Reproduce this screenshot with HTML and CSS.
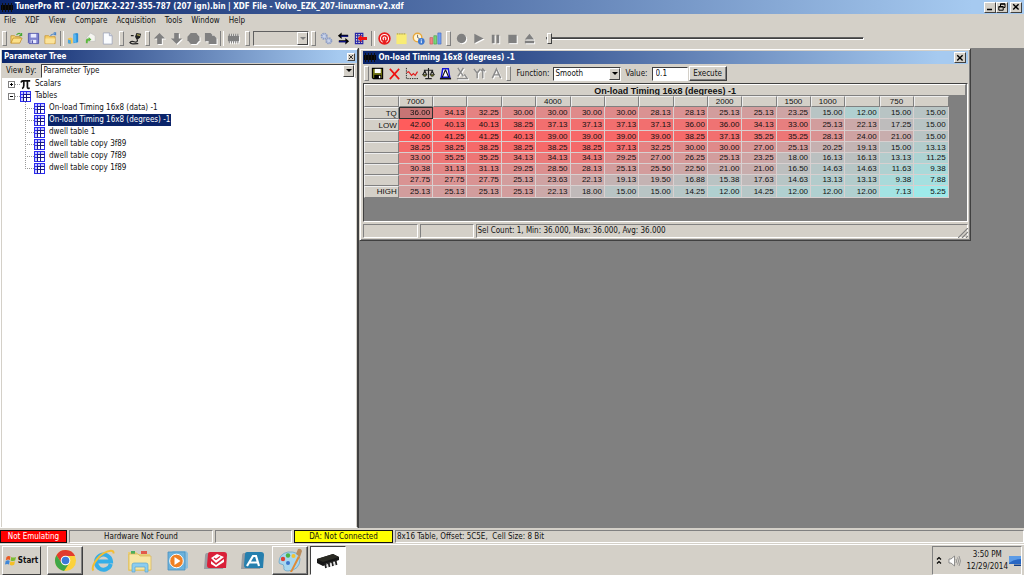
FILE: index.html
```html
<!DOCTYPE html>
<html lang="en">
<head>
<meta charset="utf-8">
<title>TunerPro RT</title>
<link rel="stylesheet" href="styles.css">
</head>
<body>
<header class="titlebar app-title">
  <svg class="chip" width="12" height="9" viewBox="0 0 12 9"><path d="M0 2h12v5H0z" fill="#050505"/><path d="M1.5 0v9M4.5 0v9M7.5 0v9M10.5 0v9" stroke="#111" stroke-width="1"/></svg>
  <h1>TunerPro RT - (207)EZK-2-227-355-787 (207 ign).bin | XDF File - Volvo_EZK_207-linuxman-v2.xdf</h1>
  <div class="winbtns">
    <button class="wb" aria-label="Minimize"><svg width="8" height="8" viewBox="0 0 8 8"><path d="M1 6.5h5" stroke="#000" stroke-width="1.5"/></svg></button>
    <button class="wb" aria-label="Restore"><svg width="8" height="8" viewBox="0 0 8 8"><path d="M2.500 3V.8h4.500v3.700H5.500M2.500 1.200h4.500M.8 3.500h4.400v3.700H.8zM.8 4h4.400" fill="none" stroke="#000"/></svg></button>
    <button class="wb wb-close" aria-label="Close"><svg width="8" height="8" viewBox="0 0 8 8"><path d="M1.200 1.200l5.400 5.400M6.600 1.200L1.200 6.600" stroke="#000" stroke-width="1.400"/></svg></button>
  </div>
</header>

<nav class="menubar">
  <button>File</button><button>XDF</button><button>View</button><button>Compare</button><button>Acquisition</button><button>Tools</button><button>Window</button><button>Help</button>
</nav>

<div class="toolbar main-tools">
  <span class="grip"></span>
  <button aria-label="Open bin"><svg viewBox="0 0 14 14"><path d="M1 12V4h4l1 1h5v2" fill="#f7d774" stroke="#b98a2a" stroke-width=".8"/><path d="M1 12l2.500-5.500H13L10.500 12z" fill="#fbe08a" stroke="#c08a20" stroke-width=".8"/><path d="M7 3q3-3 5 0M12.500 1v2.800H10" fill="none" stroke="#46a832" stroke-width="1.200"/></svg></button>
  <button aria-label="Save bin"><svg viewBox="0 0 14 14"><path d="M1.500 1.500h11v11h-10l-1-1z" fill="#7f83cf" stroke="#5256ad"/><path d="M4 2h6v4H4z" fill="#e8eaff"/><path d="M4 8.500h6V12H4z" fill="#e8eaff"/><path d="M5 9h1.500v3H5z" fill="#5256ad"/></svg></button>
  <button aria-label="Open XDF"><svg viewBox="0 0 14 14"><path d="M1 12.500V4h4l1 1h6v7.500z" fill="#f5ce68" stroke="#c79432" stroke-width=".8"/><path d="M1.500 7h10.500l-1 5.500H1.500z" fill="#fbe39a"/><path d="M7 4q3-3 5-1M10.500 1h2v2.500" fill="none" stroke="#4b86c9" stroke-width="1.200"/></svg></button>
  <span class="sep"></span>
  <button aria-label="Compare files"><svg viewBox="0 0 14 14"><path d="M7 2l4-1 1 1v9l-5 1z" fill="#2b8ed8"/><path d="M7 2l3 1v9l-3-1z" fill="#59b6ee"/><path d="M1 7l3-1 2 1v5l-3 1-2-1z" fill="#f2c34d"/><path d="M1 8l3 1v4l-3-1z" fill="#4aa5df"/></svg></button>
  <button aria-label="Recent"><svg viewBox="0 0 14 14"><path d="M3 6l4-5 5 3v6H6z" fill="#f5f5f0" stroke="#bbb" stroke-width=".6"/><path d="M2 12V9q0-2 3-2v-1.500L8 8 5 10.500V9.200q-1 0-1 1.500V12z" fill="#5cb83e"/></svg></button>
  <button aria-label="New"><svg viewBox="0 0 14 14"><path d="M2.500 1H9l3 3v9H2.500z" fill="#fafcff" stroke="#9aa0b8" stroke-width=".8"/><path d="M9 1v3h3" fill="#d8dcea" stroke="#9aa0b8" stroke-width=".8"/></svg></button>
  <span class="grip wide"></span>
  <button aria-label="Connect"><svg viewBox="0 0 14 14"><path d="M8 1l5 1-1 4-2.500 2H8L6.500 5z" fill="#222"/><path d="M8.500 3l3.500.6" stroke="#e0d66a"/><path d="M2 4h3M9 8v1.500q-.5 2-3.500 1T1 11.500q1 1.500 4 1.200t5-.2" fill="none" stroke="#222" stroke-width="1.300"/></svg></button>
  <span class="grip"></span>
  <button aria-label="Upload"><svg class="dim" viewBox="0 0 14 14"><path d="M7 1l6 6H9.500v6h-5V7H1z"/></svg></button>
  <button aria-label="Download"><svg class="dim" viewBox="0 0 14 14"><path d="M7 13l6-6H9.500V1h-5v6H1z"/></svg></button>
  <button aria-label="Verify"><svg class="dim" viewBox="0 0 14 14"><path d="M4 1h6l3.500 4v4L10 13H4L.5 9V5z"/></svg></button>
  <button aria-label="Copy"><svg class="dim" viewBox="0 0 14 14"><path d="M1 1h6l2 2v1h2l2.500 2.500V13H5v-3H1z"/></svg></button>
  <span class="sep"></span>
  <button aria-label="Chip"><svg class="dim" viewBox="0 0 14 14"><path d="M1 4h12v6H1z"/><path d="M2 2h1v10H2zM4.300 2h1v10h-1zM6.600 2h1v10h-1zM8.900 2h1v10h-1zM11.200 2h1v10h-1z"/></svg></button>
  <span class="grip wide"></span>
  <span class="combo device"><select aria-label="Device" disabled><option></option></select><i class="arrow"></i></span>
  <span class="grip mid"></span>
  <button aria-label="Settings"><svg viewBox="0 0 14 14"><circle cx="4.500" cy="4.500" r="2.800" fill="#c7d2ea" stroke="#8c9cc4" stroke-width="2" stroke-dasharray="1.500 .7"/><circle cx="9.500" cy="9.500" r="2.800" fill="#c7d2ea" stroke="#8c9cc4" stroke-width="2" stroke-dasharray="1.500 .7"/></svg></button>
  <button aria-label="Swap"><svg viewBox="0 0 14 14"><path d="M1 4l4-3.500V3h7v2H5v2.500z" fill="#000"/><path d="M13 10L9 6.500V9H2v2h7v2.500z" fill="#000"/><path d="M4 4.500h8M2 10.500h8" stroke="#1018b8"/></svg></button>
  <button aria-label="Table compare"><svg viewBox="0 0 14 14"><path d="M1.500 1.500h8v11h-8zM4 1v12M7 1v12M1 4h9M1 7h9M1 10h9" fill="none" stroke="#2424a8" stroke-width="1.200"/><path d="M4 7l4-4v2.500h6v3H8V11z" fill="#f01414"/></svg></button>
  <span class="sep broad"></span>
  <button aria-label="Record target"><svg viewBox="0 0 14 14"><circle cx="7" cy="7" r="5.800" fill="#fff" stroke="#e81c1c" stroke-width="1.800"/><circle cx="7" cy="7" r="3" fill="#fff" stroke="#e81c1c" stroke-width="1.600"/><path d="M7 6v5M5 11h4" stroke="#e81c1c" stroke-width="1.500"/></svg></button>
  <button aria-label="Notes"><svg viewBox="0 0 14 14"><path d="M1.500 2h11v11h-11z" fill="#f8ec74"/><path d="M2 2h10" stroke="#b5a852" stroke-dasharray="1 1" stroke-width="2"/></svg></button>
  <button aria-label="Info"><svg viewBox="0 0 14 14"><circle cx="6" cy="6" r="4.600" fill="#fff5d8" stroke="#e8a83c" stroke-width="1.500"/><path d="M6 3v3l2 1" stroke="#666" fill="none"/><circle cx="10" cy="10" r="3.600" fill="#3e78d0"/><path d="M10 9v3M10 7.500v.8" stroke="#fff"/></svg></button>
  <button aria-label="Histogram"><svg viewBox="0 0 14 14"><path d="M1 6h3v7H1z" fill="#f08484" stroke="#c25252" stroke-width=".6"/><path d="M5.200 4h3v9h-3z" fill="#77d877" stroke="#3d9a3d" stroke-width=".6"/><path d="M9.500 1h3.500v12H9.500z" fill="#6d9cf0" stroke="#3d62b8" stroke-width=".6"/></svg></button>
  <span class="grip mid"></span>
  <button aria-label="Record"><svg class="dim" viewBox="0 0 14 14"><circle cx="7" cy="7" r="5"/></svg></button>
  <button aria-label="Play"><svg class="dim" viewBox="0 0 14 14"><path d="M2.500 2l10 5-10 5z"/></svg></button>
  <button aria-label="Pause"><svg class="dim" viewBox="0 0 14 14"><path d="M3 3h3v9H3zM8 3h3v9H8z"/></svg></button>
  <button aria-label="Stop"><svg class="dim" viewBox="0 0 14 14"><path d="M2.500 3h9v9h-9z"/></svg></button>
  <button aria-label="Eject"><svg class="dim" viewBox="0 0 14 14"><path d="M7 2l5 6H2zM2 9.500h10V12H2z"/></svg></button>
  <input class="seek" type="range" min="0" max="100" value="0" aria-label="Playback position">
</div>

<main class="workspace">
  <section class="side">
    <div class="titlebar side-title"><h2>Parameter Tree</h2><button class="wb tiny" aria-label="Close panel"><svg width="6" height="6" viewBox="0 0 6 6"><path d="M1 1l4 4M5 1L1 5" stroke="#333"/></svg></button></div>
    <div class="viewby"><label for="view">View By:</label><span class="combo view"><select id="view"><option>Parameter Type</option></select><i class="arrow"></i></span></div>
    <ul class="tree">
      <li class="node first"><i class="box plus"></i><i class="dash"></i><svg class="ti" viewBox="0 0 11 11"><path d="M1 3.500Q1.500 1.800 3 1.800h7.200M3.800 2v4.500Q3.800 9 2 9.500M7.400 2v6q0 1.700 2.300 1.200" fill="none" stroke="#111" stroke-width="1.700"/></svg><span>Scalars</span></li>
      <li class="node"><i class="box"></i><i class="dash"></i><svg class="ti"><use href="#grid"/></svg><span>Tables</span></li>
      <li class="leaf"><i class="elbow"></i><svg class="ti"><use href="#grid"/></svg><span>On-load Timing 16x8 (data) -1</span></li>
      <li class="leaf"><i class="elbow"></i><svg class="ti"><use href="#grid"/></svg><span class="sel">On-load Timing 16x8 (degrees) -1</span></li>
      <li class="leaf"><i class="elbow"></i><svg class="ti"><use href="#grid"/></svg><span>dwell table 1</span></li>
      <li class="leaf"><i class="elbow"></i><svg class="ti"><use href="#grid"/></svg><span>dwell table copy 3f89</span></li>
      <li class="leaf"><i class="elbow"></i><svg class="ti"><use href="#grid"/></svg><span>dwell table copy 7f89</span></li>
      <li class="leaf"><i class="elbow end"></i><svg class="ti"><use href="#grid"/></svg><span>dwell table copy 1f89</span></li>
    </ul>
    <svg class="defs"><symbol id="grid" viewBox="0 0 11 11"><path d="M0 0h11v11H0z" fill="#2a2af0"/><path d="M1 1h2v2H1zM4 1h2v2H4zM7 1h3v2H7zM1 4h2v2H1zM1 7h2v3H1z" fill="#c9c9ff"/><path d="M4 4h2v2H4zM7 4h3v2H7zM4 7h2v3H4zM7 7h3v3H7z" fill="#fff"/><path d="M3.500 6.500h7M6.500 3.500v7M3.500 3.500h7M3.500 3.500v7" stroke="#15156a" stroke-width=".8"/></symbol></svg>
  </section>

  <section class="mdi">
    <article class="child">
      <div class="titlebar child-title">
        <svg class="chip" width="12" height="9" viewBox="0 0 12 9"><path d="M0 2h12v5H0z" fill="#050505"/><path d="M1.500 0v9M4.500 0v9M7.500 0v9M10.500 0v9" stroke="#111"/></svg>
        <h2>On-load Timing 16x8 (degrees) -1</h2>
        <button class="wb" aria-label="Close table"><svg width="8" height="8" viewBox="0 0 8 8"><path d="M1.200 1.200l5.400 5.400M6.600 1.200L1.200 6.600" stroke="#000" stroke-width="1.400"/></svg></button>
      </div>
      <div class="toolbar child-tools">
        <span class="grip thin"></span>
        <button aria-label="Save"><svg viewBox="0 0 14 14"><path d="M1.500 1.500h11v11h-10l-1-1z" fill="#6c7010" stroke="#000" stroke-width="1.200"/><path d="M4 2h6.500v4.500H4z" fill="#fff"/><path d="M3.500 8.500h7.500V13H3.500z" fill="#000"/><path d="M8.500 9.500H10V12H8.500z" fill="#fff"/></svg></button>
        <button aria-label="Discard"><svg viewBox="0 0 14 14"><path d="M2 2l10 11M12 2L2 13" stroke="#ee1111" stroke-width="1.800"/></svg></button>
        <button aria-label="Graph"><svg viewBox="0 0 14 14"><path d="M1.500 1v11.500H14" fill="none" stroke="#222" stroke-dasharray="1.500 1"/><path d="M2 6l2-1 3 4 2-2 2 2 2.500-4" fill="none" stroke="#e01c1c" stroke-width="1.300"/></svg></button>
        <button aria-label="Compare"><svg viewBox="0 0 14 14"><path d="M7 1v11M3.500 12.500h7M2 3.500h10M3 4L1 8.500M3 4l2 4.500M11 4L9 8.500M11 4l2 4.500" fill="none" stroke="#222" stroke-width="1.200"/><path d="M.5 8h5L4 10H2zM8.500 8h5L12 10h-2z" fill="#66681a" stroke="#222" stroke-width=".6"/></svg></button>
        <button aria-label="Difference"><svg viewBox="0 0 14 14"><path d="M4 2h6l1.500 9h-9z" fill="#fff" stroke="#1414d8" stroke-width="1.600"/><path d="M1 12.500h12" stroke="#111" stroke-width="1.800"/><path d="M7 3L3.500 11M7 3l3.500 8" stroke="#111" stroke-width="1.200"/></svg></button>
        <button aria-label="X axis"><svg class="line" viewBox="0 0 14 14"><path d="M2 1l6 9M8 1L2 10M1 12.500h12M9 8l3 4"/></svg></button>
        <button aria-label="Y axis"><svg class="line" viewBox="0 0 14 14"><path d="M1 2l3.500 4.500L8 2M4.500 6.500V12M10.500 2v10M8.500 4.500l2-2.500 2.500 2.500"/></svg></button>
        <button aria-label="Auto"><svg class="line" viewBox="0 0 14 14"><path d="M2.500 12L7 2l4.500 10M4.200 8.500h5.600"/></svg></button>
        <span class="grip"></span>
        <label for="fn">Function:</label>
        <span class="combo fn"><select id="fn"><option>Smooth</option></select><i class="arrow"></i></span>
        <label for="val">Value:</label>
        <input id="val" class="val" type="text" value="0.1">
        <button class="execute">Execute</button>
      </div>
      <div class="sheet">
        <div class="caption" id="cap"><span>On-load Timing 16x8 (degrees) -1</span></div>
        <table class="map" aria-labelledby="cap"><thead></thead><tbody></tbody></table>
      </div>
      <footer class="childstatus"><span class="cell c1"></span><span class="cell c2"></span><span class="cell c3">Sel Count: 1, Min: 36.000, Max: 36.000, Avg: 36.000</span>
        <svg class="sizer" width="10" height="10" viewBox="0 0 10 10"><path d="M0 10L10 0M4 10l6-6M8 10l2-2" stroke="#808080" stroke-width="1.200"/></svg>
      </footer>
    </article>
  </section>
</main>

<footer class="status">
  <span class="cell s-red">Not Emulating</span><span class="cell s-hw">Hardware Not Found</span><span class="cell s-blank"></span><span class="cell s-yel">DA: Not Connected</span><span class="cell s-info">8x16 Table, Offset: 5C5E,&nbsp; Cell Size: 8 Bit</span>
</footer>

<nav class="taskbar">
  <button class="start"><svg width="12" height="11" viewBox="0 0 12 11"><path d="M1.500 2Q3.500.3 5.500 1.500L4.800 5Q3 4 .8 5.300z" fill="#ea5a24"/><path d="M6.300 1.900q2 1.200 4.700 0L10.200 5.500Q8 6.500 5.500 5.400z" fill="#7dbb32"/><path d="M.7 6q2-1.300 4-.3L4 9.500Q2 8.400 0 9.600z" fill="#3f87d8"/><path d="M5.400 6.200q2.300 1 4.600 0L9.200 9.700q-2.300 1.300-4.500.1z" fill="#f5bf26"/></svg>Start</button>
  <div class="tasks">
  <button class="task raised" aria-label="Chrome"><svg width="23" height="23" viewBox="0 0 24 24"><circle cx="12" cy="12" r="11" fill="#fcd23c"/><path d="M2.500 6.500A11 11 0 0 1 22 7.200H12A5 5 0 0 0 7.400 14z" fill="#e23b2e"/><path d="M2.500 6.500A11 11 0 0 0 10.500 22.900L15.500 15.500A5 5 0 0 1 7.500 14.200z" fill="#3fa648"/><circle cx="12" cy="12" r="5" fill="#fff"/><circle cx="12" cy="12" r="4" fill="#3c79d8"/></svg></button>
  <button class="task" aria-label="Internet Explorer"><svg width="24" height="24" viewBox="0 0 24 24"><path d="M19.800 15A7.500 7.500 0 1 1 20 12.500H7" fill="none" stroke="#35aee8" stroke-width="4"/><path d="M2.500 21.500C-.5 18 6 8 13 4 18 1 23 .5 22.500 4.500" fill="none" stroke="#f4bd32" stroke-width="2"/></svg></button>
  <button class="task" aria-label="Explorer"><svg width="26" height="24" viewBox="0 0 26 24"><path d="M1 3h8l2 2h12v17H1z" fill="#e9ce78"/><path d="M4 2h4v3H4z" fill="#4cae5a"/><path d="M14 2h6v3h-6z" fill="#e25a4a"/><path d="M2 5h9l2 2h11v14H2z" fill="#f8e6a4" stroke="#d7b458" stroke-width=".7"/><path d="M5 23v-7q0-2 2-2h12q2 0 2 2v7h-3v-5H8v5z" fill="#8ccdf0" stroke="#5ba6cf" stroke-width=".7"/></svg></button>
  <button class="task" aria-label="Media Player"><svg width="22" height="22" viewBox="0 0 22 22"><path d="M5 1h14l2 2v15l-2 1z" fill="#8ebfdc"/><path d="M1 2h17v18H1z" fill="#6bb2dc" stroke="#4a8fbe" stroke-width=".8"/><circle cx="9.500" cy="11" r="6.800" fill="#f08022" stroke="#fff"/><path d="M7.500 7l6 4-6 4z" fill="#fff"/></svg></button>
  <button class="task" aria-label="Red app"><svg width="25" height="20" viewBox="0 0 25 20"><path d="M4 2Q2 2 2 5L1 18h19l1-3V2z" fill="#999da2"/><path d="M7 1h14q3 0 3 3l-1 13H6Q4 17 4 14L5 3q0-2 2-2z" fill="#d91f38"/><path d="M8 7l6-4 7 3-8 6z" fill="#fff"/><path d="M11 7l2 1.500 4-3" fill="none" stroke="#d91f38" stroke-width="1.200"/><path d="M8 10l5 4 8-6v3l-8 5-5-3z" fill="#fff"/></svg></button>
  <button class="task" aria-label="Blue app"><svg width="25" height="20" viewBox="0 0 25 20"><path d="M4 2Q2 2 2 5L1 18h19l1-3V2z" fill="#999da2"/><path d="M7 1h14q3 0 3 3l-1 13H6Q4 17 4 14L5 3q0-2 2-2z" fill="#267fae"/><path d="M7 15l6-10h3l3 10M10 11.500h8" fill="none" stroke="#fff" stroke-width="2.200"/></svg></button>
  <button class="task raised" aria-label="Paint"><svg width="26" height="25" viewBox="0 0 26 25"><path d="M2 14Q2 6 11 4q11-1 12 7 0 11-12 12-5 0-4-4 0-3-3-3-2 0-2-2z" fill="#a8d6ee" stroke="#6aa5c8" stroke-width=".8"/><circle cx="6" cy="11" r="2.200" fill="#dd3f34"/><circle cx="11" cy="7.500" r="2.200" fill="#4ab447"/><circle cx="16.500" cy="8" r="2" fill="#f3c330"/><circle cx="11" cy="15" r="2" fill="#3a75cd"/><path d="M13 24l8-16 2 1-8 15z" fill="#e08b36"/><path d="M19 6l2-5q3-1 4 2l-2 6z" fill="#b98c5c"/></svg></button>
  <button class="task pressed" aria-label="TunerPro"><svg width="24" height="16" viewBox="0 0 24 16"><path d="M1 6L17 1l6 3v3L7 13l-6-3z" fill="#161616"/><path d="M1 6L17 1l6 3L7 9z" fill="#2b2b24"/><path d="M9 10l1 5M12.500 9l1 5M16 8l1 5M19.500 7l1 5" stroke="#222" stroke-width="1.800"/><path d="M10.800 10.500l1 4M14.300 9.500l1 4M17.800 8.500l1 4" stroke="#ddd" stroke-width=".9"/></svg></button>
  </div>
  <div class="tray">
    <svg width="6" height="9" viewBox="0 0 6 9"><path d="M1 3.500l2-2 2 2M1 7.500l2-2 2 2" fill="none" stroke="#000" stroke-width="1.200"/></svg>
    <svg width="13" height="12" viewBox="0 0 13 12"><path d="M1 4h2l3.500-3v10L3 8H1z" fill="#fff" stroke="#777" stroke-width=".8"/><path d="M8 4q1.200 2 0 4M9.500 2.500q2.300 3.500 0 7M11 1q3 5 0 10" fill="none" stroke="#888" stroke-width=".8"/></svg>
    <div class="when">
      <time class="clock"><span>3:50 PM</span><span>12/29/2014</span></time>
      <svg width="12" height="12" viewBox="0 0 12 12"><path d="M0 1h12v8H0z" fill="#2867c4"/><path d="M0 1h12v3Q5 4 0 8z" fill="#5c9be6"/><path d="M5 9.500h7V11H5z" fill="#123e86"/></svg>
    </div>
  </div>
</nav>
<script src="map.js"></script>
</body>
</html>
```
FILE: styles.css
```css
* { box-sizing: border-box; }
:root { --face: #d4d0c8; --shade: #808080; --dark: #404040; --lite: #fff; }
body {
  margin: 0; height: 100vh; display: flex; flex-direction: column; overflow: hidden;
  background: var(--face); color: #111;
  font: 8px/12px "DejaVu Sans Condensed", "DejaVu Sans", sans-serif;
}
h1, h2 { margin: 0; font-size: inherit; line-height: inherit; white-space: nowrap; }
button, input, select { font: inherit; color: inherit; margin: 0; padding: 0; border: 0; background: none; border-radius: 0; }
svg { display: block; flex: none; }
.defs { width: 0; height: 0; }

.titlebar { display: flex; align-items: center; color: #fff; background: linear-gradient(90deg, #0a246a, #a6caf0 95%); flex: none; font-weight: bold; }
.titlebar h1, .titlebar h2 { flex: 1; }
.app-title { height: 14px; padding: 0 2px 0 1px; gap: 2px; }
.winbtns { display: flex; }
.wb { width: 12px; height: 11px; display: flex; align-items: center; justify-content: center; background: var(--face); border: 1px solid; border-color: #fff #404040 #404040 #fff; }
.wb-close { margin-left: 2px; }
.tiny { width: 8px; height: 8px; }

.menubar { display: flex; height: 14px; flex: none; padding-left: 4px; gap: 9px; }
.menubar button { line-height: 14px; }

.toolbar { display: flex; align-items: center; flex: none; }
.toolbar > button { width: 17px; height: 17px; display: flex; align-items: center; justify-content: center; flex: none; }
.toolbar > button svg { width: 13px; height: 13px; }
.main-tools { height: 20px; padding-left: 1px; }
.dim { fill: #808080; filter: drop-shadow(1px 1px 0 #fff); }
.line { fill: none; stroke: #8a8a8a; stroke-width: 1.5px; filter: drop-shadow(1px 1px 0 #fff); }
.grip, .sep { flex: none; display: flex; justify-content: center; width: 7px; height: 15px; }
.grip::before { content: ""; width: 3px; border: 1px solid; border-color: #fff #808080 #808080 #fff; }
.sep { width: 6px; }
.sep::before { content: ""; width: 2px; border-left: 1px solid #808080; border-right: 1px solid #fff; }
.thin { width: 6px; }
.wide { width: 11px; }
.mid { width: 9px; }
.broad { width: 7px; }

.combo { display: flex; position: relative; background: #fff; border: 1px solid; border-color: #808080 #fff #fff #808080; }
.combo select { appearance: none; flex: 1; width: 100%; padding-left: 1px; }
.arrow { position: absolute; right: 0; top: 0; bottom: 0; width: 11px; background: var(--face); border: 1px solid; border-color: #fff #404040 #404040 #fff; pointer-events: none; display: flex; align-items: center; justify-content: center; }
.arrow::before { content: ""; border: 3px solid transparent; border-top-color: #000; border-bottom: 0; }
.device { width: 56px; height: 15px; background: var(--face); border-color: #606060 #fff #fff #606060; }
.device .arrow::before { border-top-color: #808080; }

.seek { appearance: none; width: 318px; height: 14px; margin-left: 8px; }
.seek::-webkit-slider-runnable-track { height: 3px; border: 1px solid; border-color: #606060 #fff #fff #606060; background: #404040; }
.seek::-webkit-slider-thumb { appearance: none; width: 5px; height: 11px; margin-top: -5px; background: var(--face); border: 1px solid; border-color: #fff #404040 #404040 #fff; }

.workspace { flex: 1; display: flex; min-height: 0; }
.side { flex: 0 0 35%; display: flex; flex-direction: column; border: 1px solid; border-color: #fff #404040 #fff #fff; border-top-width: 2px; padding: 0 0 0 1px; }
.side-title { height: 13px; padding: 0 2px 0 2px; }
.viewby { display: flex; align-items: center; height: 15px; padding-left: 4px; gap: 5px; flex: none; }
.view { flex: 1; height: 14px; margin-right: 2px; border-color: #404040 #fff #fff #404040; }
.tree { flex: 1; margin: 0; padding: 0; list-style: none; background: #fff; border-right: 1px solid #d4d0c8; }
.tree li { display: flex; align-items: center; height: 12px; }
.node { padding-left: 6px; }
.box { width: 7px; height: 7px; border: 1px solid #808080; background: linear-gradient(#000, #000) center / 3px 1px no-repeat; }
.plus { background: linear-gradient(#000, #000) center / 3px 1px no-repeat, linear-gradient(#000, #000) center / 1px 3px no-repeat; }
.dash { width: 5px; border-top: 1px dotted #999; }
.ti { width: 11px; height: 11px; margin-right: 2px; }
.tree span { padding: 0 1px; margin-left: 1px; }
.tree .sel { background: #0a246a; color: #fff; }
.leaf { padding-left: 23px; }
.elbow { width: 9px; height: 12px; background: repeating-linear-gradient(#999 0 1px, transparent 1px 2px) left top / 1px 100% no-repeat, repeating-linear-gradient(90deg, #999 0 1px, transparent 1px 2px) left center / 100% 1px no-repeat; }
.end { background-size: 1px 6px, 100% 1px; }

.mdi { flex: 1; min-width: 0; background: #808080; border-left: 1px solid #404040; }
.child { width: 92%; background: var(--face); border: 1px solid; border-color: var(--face) #404040 #404040 var(--face); box-shadow: inset 1px 1px #fff, inset -1px -1px #808080; padding: 2px 2px 2px 3px; }
.child-title { height: 13px; padding: 0 2px 0 1px; gap: 2px; }
.child-tools { height: 19px; }
.child-tools label { margin: 0 4px; }
.fn { width: 68px; height: 14px; border-color: #404040 #fff #fff #404040; }
.val { width: 36px; height: 14px; padding-left: 3px; background: #fff; border: 1px solid; border-color: #404040 #fff #fff #404040; }
.toolbar > .execute { width: 38px; height: 15px; margin-left: 1px; border: 1px solid; border-color: #fff #404040 #404040 #fff; box-shadow: inset -1px -1px #808080; }
.sheet { height: 139px; background: #808080; border: 1px solid; border-color: #404040 #fff #fff #404040; font-family: "Liberation Sans", Arial, sans-serif; }
.caption { height: 12px; overflow: hidden; margin-right: 1px; background: var(--face); border: 1px solid; border-color: #fff #808080 #808080 #fff; text-align: center; font: bold 9px/13px "Liberation Sans", Arial, sans-serif; }
.map { table-layout: fixed; width: 97%; height: 102px; border-collapse: separate; border-spacing: 0; line-height: 9px; }
.map th, .map td { padding: 0 2px 0 0; text-align: right; font-weight: normal; overflow: hidden; white-space: nowrap; }
.map th { background: var(--face); border: 1px solid; border-color: #eee #808080 #808080 #eee; padding: 0 1px 0 0; }
.map thead th { text-align: center; }
.map td { border: solid #d8d0d0; border-width: 0 1px 1px 0; }
.map .picked { outline: 1px solid #333; outline-offset: -1px; filter: saturate(70%) brightness(95%); }
.childstatus { display: flex; height: 14px; margin-top: 2px; gap: 2px; position: relative; }
.cell { border: 1px solid; border-color: #808080 #fff #fff #808080; white-space: nowrap; overflow: hidden; }
.c1 { width: 55px; } .c2 { width: 54px; } .c3 { flex: 1; line-height: 12px; }
.sizer { position: absolute; right: 0; bottom: 0; }

.status { display: flex; gap: 2px; height: 16px; flex: none; padding: 2px 0 1px; text-align: center; line-height: 11px; }
.s-red { width: 67px; background: #f00; color: #fff; border-color: #111; }
.s-hw { width: 144px; }
.s-blank { width: 77px; }
.s-yel { width: 99px; background: #ff0; border-color: #111; }
.s-info { flex: 1; text-align: left; padding-left: 1px; }

.taskbar { display: flex; align-items: stretch; height: 31px; flex: none; border-top: 1px solid #fff; padding: 1px 2px 0 2px; }
.start { width: 39px; margin-right: 6px; display: flex; align-items: center; justify-content: center; gap: 1px; font-weight: bold; border: 1px solid; border-color: #fff #404040 #404040 #fff; }
.tasks { display: flex; justify-content: space-between; width: 299px; }
.task { width: 36px; display: flex; align-items: center; justify-content: center; border: 1px solid transparent; }
.raised { border-color: #fff #404040 #404040 #fff; box-shadow: inset -1px -1px #808080; }
.pressed { background: #fff; border-color: #404040 #fff #fff #404040; }
.tray { margin-left: auto; display: flex; align-items: center; padding-left: 3px; gap: 6px; border: 1px solid; border-color: #808080 #fff #fff #808080; }
.when { display: flex; align-items: center; gap: 1px; }
.clock { display: flex; flex-direction: column; align-items: center; }
```
FILE: map.js
```js
const heads = ["7000", "", "", "", "4000", "", "", "", "", "2000", "", "1500", "1000", "", "750", ""];
const sides = ["TQ", "LOW", "", "", "", "", "", "HIGH"];
const rows = [
  "36.00 34.13 32.25 30.00 30.00 30.00 30.00 28.13 28.13 25.13 25.13 23.25 15.00 12.00 15.00 15.00",
  "42.00 40.13 40.13 38.25 37.13 37.13 37.13 37.13 36.00 36.00 34.13 33.00 25.13 22.13 17.25 15.00",
  "42.00 41.25 41.25 40.13 39.00 39.00 39.00 39.00 38.25 37.13 35.25 35.25 28.13 24.00 21.00 15.00",
  "38.25 38.25 38.25 38.25 38.25 38.25 37.13 32.25 30.00 30.00 27.00 25.13 20.25 19.13 15.00 13.13",
  "33.00 35.25 35.25 34.13 34.13 34.13 29.25 27.00 26.25 25.13 23.25 18.00 16.13 16.13 13.13 11.25",
  "30.38 31.13 31.13 29.25 28.50 28.13 25.13 25.50 22.50 21.00 21.00 16.50 14.63 14.63 11.63 9.38",
  "27.75 27.75 27.75 25.13 23.63 22.13 19.13 19.50 16.88 15.38 17.63 14.63 13.13 13.13 9.38 7.88",
  "25.13 25.13 25.13 25.13 22.13 18.00 15.00 15.00 14.25 12.00 14.25 12.00 12.00 12.00 7.13 5.25"
];

// Blends from cyan (lowest value) to red (highest value).
function heat(v) {
  const t = (v - 5.25) / 36.75;
  const gb = Math.round(234 - t * 142);
  return `rgb(${Math.round(158 + t * 97)},${gb},${gb})`;
}

const map = document.querySelector(".map");
map.tHead.innerHTML = "<tr><th></th>" + heads.map(h => `<th scope="col">${h}</th>`).join("") + "</tr>";
map.tBodies[0].innerHTML = rows.map((r, y) =>
  `<tr><th scope="row">${sides[y]}</th>` +
  r.split(" ").map((v, x) => `<td${x + y ? "" : ' class="picked"'} style="background:${heat(+v)}">${v}</td>`).join("") +
  "</tr>").join("");
```
